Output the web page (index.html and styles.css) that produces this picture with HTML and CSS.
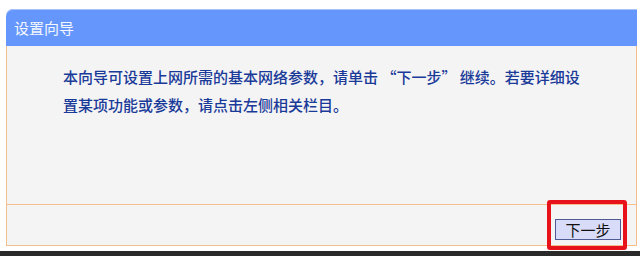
FILE: index.html
```html
<!DOCTYPE html>
<html lang="zh-CN">
<head>
<meta charset="utf-8">
<title>设置向导</title>
<link rel="stylesheet" href="styles.css">
</head>
<body>
<div class="page">
  <div class="panel">
    <div class="panel-head">设置向导</div>
    <div class="panel-body">
      <p class="intro">本向导可设置上网所需的基本网络参数，请单击 “下一步” 继续。若要详细设置某项功能或参数，请点击左侧相关栏目。</p>
    </div>
    <div class="panel-foot">
      <button class="btn" type="button">下一步</button>
      <span class="mark"></span>
    </div>
  </div>
</div>
<div class="edge"></div>
</body>
</html>
```
FILE: styles.css
```css
html, body {
  margin: 0;
  padding: 0;
  background: #ffffff;
  width: 640px;
  height: 256px;
  overflow: hidden;
  font-family: "Noto Sans CJK SC", "Noto Sans", sans-serif;
}
.page {
  padding: 9px 3px 0 6px;
  height: 242px;
}
.panel {
  width: 631px;
  box-sizing: border-box;
}
.panel-head {
  height: 37px;
  background: #6496fb;
  border-radius: 7px 0 0 0;
  color: #f4f7ff;
  font-size: 15px;
  line-height: 37px;
  padding-left: 8px;
  box-shadow: inset 0 1px 0 #a9c3fd;
}
.panel-body {
  height: 159px;
  background: #f4f4f4;
  border-left: 1px solid #f3bf8c;
  border-right: 1px solid #f3bf8c;
  border-bottom: 1px solid #f3bf8c;
  box-sizing: border-box;
  padding: 17px 50px 0 56px;
}
.intro {
  margin: 0;
  font-size: 15px;
  font-weight: 500;
  line-height: 28px;
  color: #1a3a99;
  width: 522px;
}
.panel-foot {
  position: relative;
  height: 41px;
  background: #f4f4f4;
  border-left: 1px solid #f3bf8c;
  border-right: 1px solid #f3bf8c;
  border-bottom: 1px solid #f3bf8c;
  box-sizing: border-box;
  display: flex;
  justify-content: flex-end;
  align-items: flex-start;
  padding: 14px 15px 0 0;
}
.btn {
  width: 66px;
  height: 21px;
  padding: 0;
  margin: 0;
  background: #d9dcf8;
  border: 1px solid #4e5a96;
  font-family: "Noto Sans CJK SC", sans-serif;
  font-size: 15px;
  line-height: 19px;
  color: #111111;
}
.mark {
  position: absolute;
  left: 540px;
  top: -5px;
  width: 72px;
  height: 42px;
  border: 4px solid #e8121a;
  border-radius: 3px;
}
.edge {
  height: 5px;
  background: #2a2a2a;
  margin-top: 0;
}
```
